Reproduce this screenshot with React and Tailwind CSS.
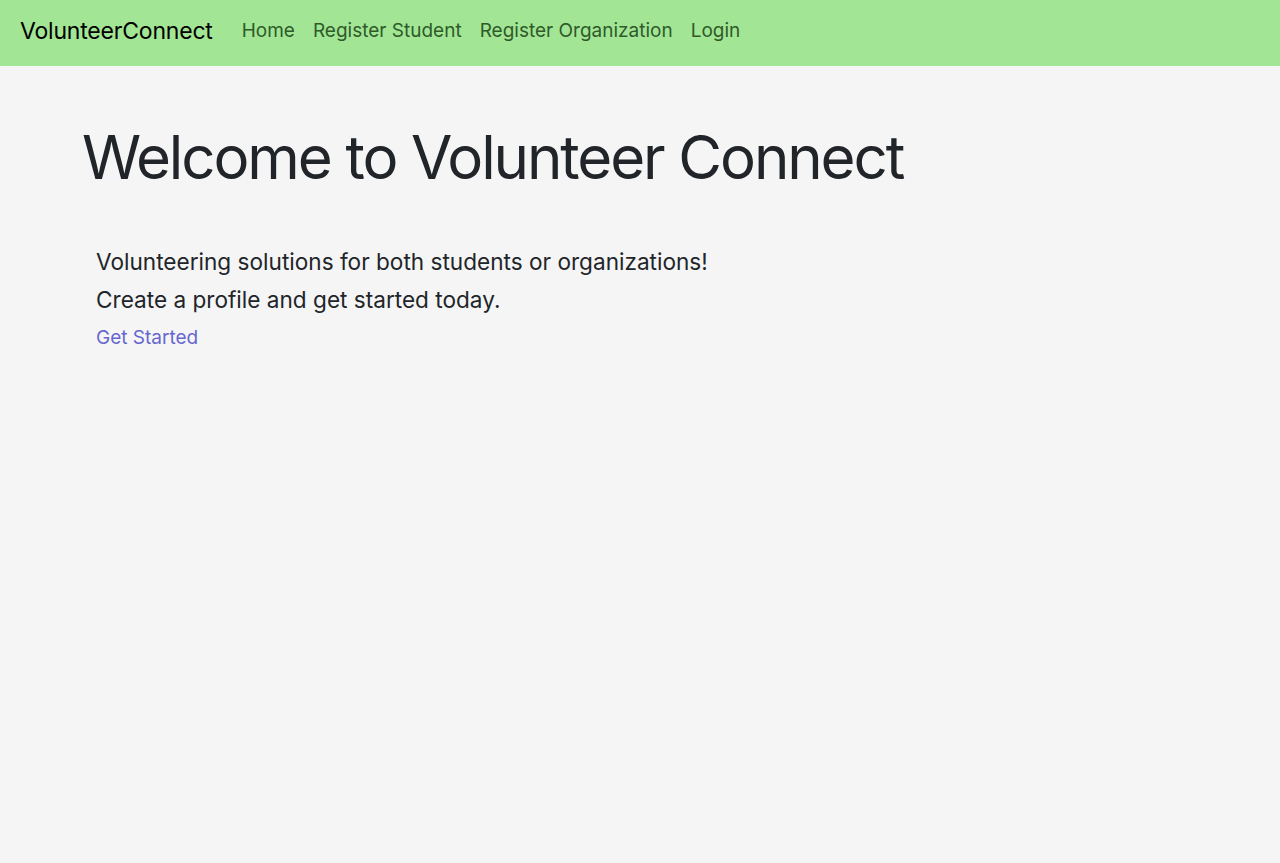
import React from 'react';

const navLinks = ['Home', 'Register Student', 'Register Organization', 'Login'];

const App = () => {
  return (
    <div className="min-h-[863px] bg-[#f5f5f5] font-['Inter',sans-serif] text-[#212529]">
      <nav className="h-[66px] bg-[#a2e695] flex items-center px-5 pb-1">
        <a href="#" className="text-[23px] text-black mr-[29px] tracking-[-0.2px]">VolunteerConnect</a>
        <ul className="flex items-center gap-[18px]">
          {navLinks.map((link) => (
            <li key={link}>
              <a href="#" className="text-[19px] text-[#2f5a29]">{link}</a>
            </li>
          ))}
        </ul>
      </nav>

      <main className="px-[82px] pt-[61px]">
        <h1 className="text-[60px] leading-none tracking-[-2.1px]">Welcome to Volunteer Connect</h1>
        <section className="pl-[14px] mt-[56px]">
          <p className="text-[22.6px] leading-[38px]">Volunteering solutions for both students or organizations!</p>
          <p className="text-[22.6px] leading-[38px]">Create a profile and get started today.</p>
          <a href="#" className="text-[19px] text-[#6668cf] leading-[38px]">Get Started</a>
        </section>
      </main>
    </div>
  );
};

export default App;
